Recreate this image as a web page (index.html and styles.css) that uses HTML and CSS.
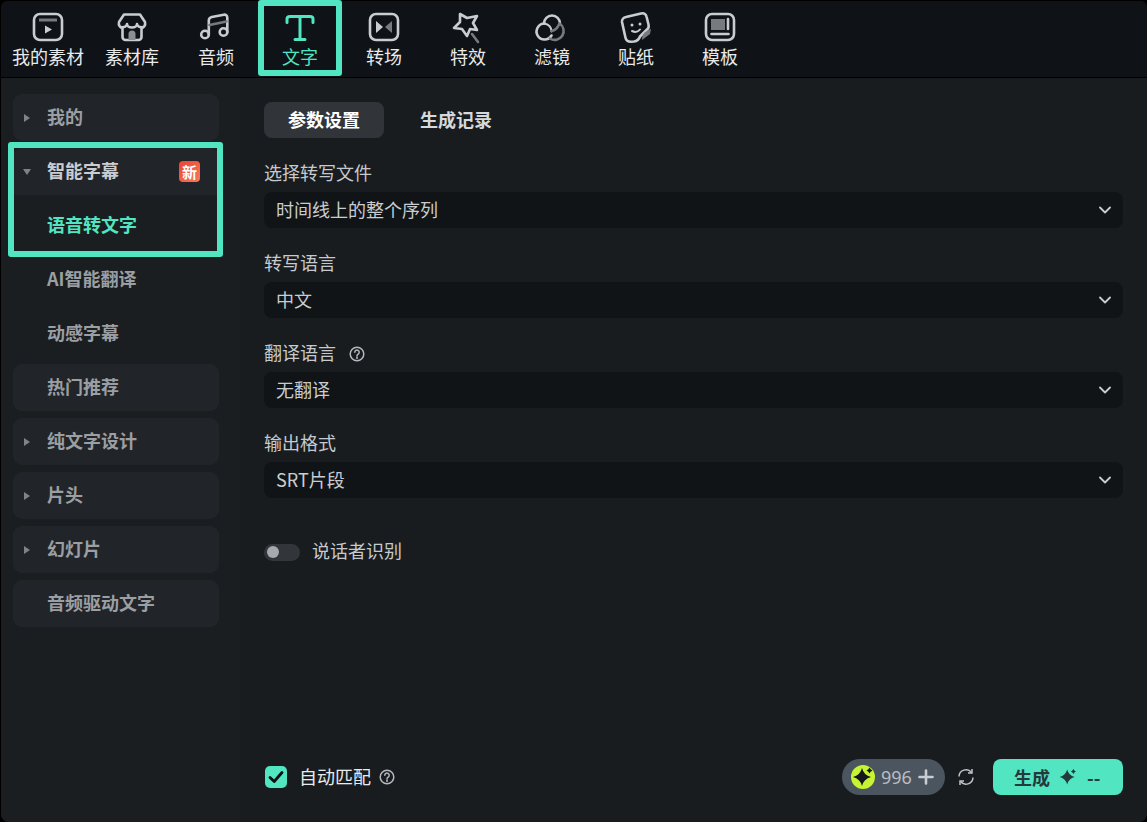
FILE: index.html
```html
<!DOCTYPE html>
<html lang="zh-CN">
<head>
<meta charset="utf-8">
<title>文字</title>
<link rel="stylesheet" href="styles.css">
</head>
<body>
<div class="app">
  <nav class="topbar">
    <div class="tab">
      <svg class="ico" viewBox="0 0 32 32"><rect x="2" y="3" width="28" height="26" rx="6" class="s"/><path d="M7 9h18" class="dim"/><path d="M13 14.500l7 4-7 4z" fill="#c9cdd1"/></svg>
      <span>我的素材</span>
    </div>
    <div class="tab">
      <svg class="ico" viewBox="0 0 32 32"><path d="M8 3.500h16l5 7.500c1 4-2 6-3.500 6v9a3 3 0 0 1-3 3h-13a3 3 0 0 1-3-3v-9C5 17 2 15 3 11z" class="s"/><path d="M5 16c3 1 6-1 6-3 0 2 2 3.500 5 3.500s5-1.500 5-3.500c0 2 3 4 6 3" class="s"/><path d="M12.500 29v-6a3.500 3.500 0 0 1 7 0v6z" fill="#8b8f93"/></svg>
      <span>素材库</span>
    </div>
    <div class="tab">
      <svg class="ico" viewBox="0 0 32 32"><circle cx="5" cy="23.500" r="3.800" class="s"/><circle cx="23.500" cy="21" r="3.800" class="s"/><path d="M8.800 23.500V9.500c0-2 .8-3 3-3.500l12-2.300c2-.4 3.500.8 3.500 3V21" class="s"/><path d="M9.500 14l17-3.500" class="dimthick"/></svg>
      <span>音频</span>
    </div>
    <div class="tab active">
      <svg class="ico" viewBox="0 0 32 32"><path d="M3 11.500V8Q3 5.500 6 5.500h20q3 0 3 2.500v3.500M16 6v22.500M11 28.500h10" class="t"/></svg>
      <span>文字</span>
    </div>
    <div class="tab">
      <svg class="ico" viewBox="0 0 32 32"><rect x="2" y="3" width="28" height="26" rx="6" class="s"/><path d="M8 10l7 6-7 6z" fill="#c9cdd1"/><path d="M24 10l-7 6 7 6z" fill="#777b7f"/></svg>
      <span>转场</span>
    </div>
    <div class="tab">
      <svg class="ico" viewBox="0 0 32 32"><path d="M8 3l7 4 10-2-4 7 4 7-7-1-3 7-5-7-8-1 6-6z" class="s"/><path d="M20 23l6 8" class="dimthick"/></svg>
      <span>特效</span>
    </div>
    <div class="tab">
      <svg class="ico" viewBox="0 0 32 32"><path d="M8 12.500a8 8 0 0 1 16 0" class="s"/><path d="M8.500 12.500a8 8 0 1 0 7 12" class="s"/><path d="M8.500 12.500c4 1 7 3.500 7 8" class="s thin"/><path d="M23.500 12.500a8 8 0 1 1-9.500 15" class="dimthick"/><path d="M15.500 20c3-.5 6-3 7.500-6.500" class="dimthick"/></svg>
      <span>滤镜</span>
    </div>
    <div class="tab">
      <svg class="ico" viewBox="0 0 32 32"><path d="M6 6l15-3.500c3-.7 5 .5 5.500 3l2 8c.5 2 0 4-1.500 5l-7 7c-1 3-3 4.500-6 5l-3 .2c-3 0-5-1.500-5.500-4L2 11c-.3-2.500 1.500-4.500 4-5z" class="s"/><circle cx="12" cy="14" r="1.500" fill="#c9cdd1"/><circle cx="20" cy="13" r="1.500" fill="#c9cdd1"/><path d="M12 20c3 1.500 6 1 8-1.500" class="s thin"/><path d="M22 29c0-6 2-8 9-11l-1 5z" fill="#777b7f"/></svg>
      <span>贴纸</span>
    </div>
    <div class="tab">
      <svg class="ico" viewBox="0 0 32 32"><rect x="2" y="3" width="28" height="26" rx="6" class="s"/><rect x="7" y="8" width="14" height="11" fill="#777b7f"/><path d="M24 8v10M7.500 23h17" class="s"/></svg>
      <span>模板</span>
    </div>
  </nav>

  <div class="content">
    <aside class="sidebar">
      <div class="cat"><i class="arrow"></i>我的</div>
      <div class="group">
        <div class="cat open"><i class="arrow down"></i>智能字幕<b class="new">新</b></div>
        <div class="sub current">语音转文字</div>
        <div class="sub">AI智能翻译</div>
        <div class="sub">动感字幕</div>
      </div>
      <div class="cat"><i class="arrow none"></i>热门推荐</div>
      <div class="cat"><i class="arrow"></i>纯文字设计</div>
      <div class="cat"><i class="arrow"></i>片头</div>
      <div class="cat"><i class="arrow"></i>幻灯片</div>
      <div class="cat"><i class="arrow none"></i>音频驱动文字</div>
      <div class="mark-side"></div>
    </aside>

    <main class="main">
      <div class="tabs2">
        <div class="seg on">参数设置</div>
        <div class="seg">生成记录</div>
      </div>
      <div class="field">
        <label class="lbl">选择转写文件</label>
        <div class="select">时间线上的整个序列<svg class="chev" viewBox="0 0 12 8"><path d="M1 1.500l5 5 5-5"/></svg></div>
      </div>
      <div class="field">
        <label class="lbl">转写语言</label>
        <div class="select">中文<svg class="chev" viewBox="0 0 12 8"><path d="M1 1.500l5 5 5-5"/></svg></div>
      </div>
      <div class="field">
        <label class="lbl">翻译语言<svg class="help gap" viewBox="0 0 16 16"><circle cx="8" cy="8" r="6.800"/><path d="M5.800 6.300a2.200 2.200 0 1 1 3.400 1.800c-.8.500-1.200 1-1.200 1.900"/><path d="M8 11.300v1.200"/></svg></label>
        <div class="select">无翻译<svg class="chev" viewBox="0 0 12 8"><path d="M1 1.500l5 5 5-5"/></svg></div>
      </div>
      <div class="field">
        <label class="lbl">输出格式</label>
        <div class="select">SRT片段<svg class="chev" viewBox="0 0 12 8"><path d="M1 1.500l5 5 5-5"/></svg></div>
      </div>
      <div class="toggle-row">
        <span class="toggle"><i></i></span>
        <span class="toggle-text">说话者识别</span>
      </div>
      <div class="bottom">
        <span class="check"><svg viewBox="0 0 22 22"><path d="M5 11.500l4.200 4L17 6.500"/></svg></span>
        <span class="auto">自动匹配</span>
        <svg class="help" viewBox="0 0 16 16"><circle cx="8" cy="8" r="6.800"/><path d="M5.800 6.300a2.200 2.200 0 1 1 3.400 1.800c-.8.500-1.200 1-1.200 1.900"/><path d="M8 11.300v1.200"/></svg>
        <div class="credits">
          <span class="coin"><svg viewBox="0 0 24 24"><path d="M11 3Q12.800 10.200 20 12 12.800 13.800 11 21 9.200 13.800 2 12 9.200 10.200 11 3z"/><path d="M18.500 2.500q.8 2.200 3 3-2.200.8-3 3-.8-2.200-3-3 2.200-.8 3-3z"/></svg></span>
          <span class="num">996</span>
          <svg class="plus" viewBox="0 0 16 16"><path d="M8 1.500v13M1.500 8h13"/></svg>
        </div>
        <svg class="refresh" viewBox="0 0 18 18"><path d="M2 8.500A7 7 0 0 1 14.500 4.500M16 9.500A7 7 0 0 1 3.500 13.500"/><path d="M15 1v4h-4M3 17v-4h4"/></svg>
        <div class="gen">生成<svg viewBox="0 0 24 24"><path d="M11 3Q12.800 10.200 20 12 12.800 13.800 11 21 9.200 13.800 2 12 9.200 10.200 11 3z"/><path d="M18.500 2.500q.8 2.200 3 3-2.200.8-3 3-.8-2.200-3-3 2.200-.8 3-3z"/></svg><span>--</span></div>
      </div>
    </main>
  </div>
  <div class="mark-top"></div>
</div>
</body>
</html>
```

FILE: styles.css
```css
* { box-sizing: border-box; }
html, body { margin: 0; height: 100%; background: #000; }
body { font-family: "Noto Sans CJK SC", "Liberation Sans", sans-serif; font-size: 18px; color: #c9cdd1; overflow: hidden; }
.app { position: relative; width: 1147px; height: 822px; background: #000; display: flex; flex-direction: column; padding: 1px 0 0 1px; overflow: hidden; }
.topbar { height: 76px; flex: none; display: flex; padding-left: 5px; background: #0f1317; border-radius: 6px 6px 0 0; }
.tab { width: 84px; display: flex; flex-direction: column; align-items: center; padding-top: 10px; color: #e8eaec; line-height: 24px; }
.tab span { margin-top: 1px; }
.ico { width: 32px; height: 32px; display: block; flex: none; overflow: visible; }
.s { fill: none; stroke: #c9cdd1; stroke-width: 2.600; stroke-linejoin: round; stroke-linecap: round; }
.thin { stroke-width: 2; }
.dim { fill: none; stroke: #777b7f; stroke-width: 3; }
.dimthick { fill: none; stroke: #777b7f; stroke-width: 2.600; stroke-linecap: round; }
.t { fill: none; stroke: #52e5c2; stroke-width: 3; stroke-linecap: round; stroke-linejoin: round; }
.active { color: #52e5c2; }
.mark-top { position: absolute; left: 258px; top: 0; width: 84px; height: 76px; border: 6px solid #52e5c2; border-radius: 3px; }
.content { flex: 1; display: flex; margin-top: 1px; min-height: 0; background: #181c1f; border-radius: 0 0 8px 8px; }
.sidebar { position: relative; width: 239px; flex: none; padding: 16px 21px 0 12px; background: #1a1e21; border-bottom-left-radius: 8px; display: flex; flex-direction: column; gap: 7px; font-weight: 700; color: #9b9fa3; }
.cat { height: 47px; display: flex; align-items: center; padding-bottom: 4px; background: #212529; border-radius: 9px; }
.arrow { width: 0; height: 0; margin: 4px 17px 0 11px; border-left: 6px solid #7f8387; border-top: 4px solid transparent; border-bottom: 4px solid transparent; flex: none; }
.arrow.down { margin: 4px 16px 0 10px; border-top: 6px solid #7f8387; border-left: 4px solid transparent; border-right: 4px solid transparent; border-bottom: 0; }
.arrow.none { border-color: transparent; }
.open { color: #c9cdd1; border-radius: 9px 9px 0 0; }
.group { display: flex; flex-direction: column; }
.sub { height: 54px; display: flex; align-items: center; padding: 4px 0 0 34px; }
.current { color: #52e5c2; }
.new { margin: 4px 19px 0 auto; width: 21px; height: 21px; border-radius: 4px; background: linear-gradient(135deg, #e8452f, #f77a5a); color: #fff; font-size: 15px; font-weight: 700; display: flex; align-items: center; justify-content: center; }
.mark-side { position: absolute; left: 7px; top: 64px; width: 215px; height: 115px; border: 6px solid #52e5c2; border-radius: 3px; }
.main { flex: 1; position: relative; margin-left: 12px; padding: 24px 24px 27px 12px; display: flex; flex-direction: column; }
.tabs2 { display: flex; gap: 12px; margin-bottom: 23px; height: 36px; font-weight: 700; }
.seg { width: 120px; display: flex; align-items: center; justify-content: center; padding-bottom: 2px; border-radius: 8px; color: #d6d9dc; }
.seg.on { background: #31353a; color: #fff; }
.field { height: 90px; flex: none; }
.lbl { display: flex; align-items: center; height: 26px; padding-bottom: 4px; margin-bottom: 5px; color: #c6cace; line-height: 22px; }
.select { height: 36px; display: flex; align-items: center; justify-content: space-between; padding: 0 12px 2px; background: #111417; border-radius: 8px; color: #c9cdd1; }
.chev { width: 12px; height: 8px; margin-top: 2px; fill: none; stroke: #c9cdd1; stroke-width: 1.800; stroke-linecap: round; stroke-linejoin: round; }
.help { width: 16px; height: 16px; fill: none; stroke: #b5b9bd; stroke-width: 1.500; stroke-linecap: round; flex: none; }
.help.gap { margin: 4px 0 0 13px; }
.toggle-row { display: flex; align-items: center; gap: 12px; margin-top: 18px; height: 26px; color: #c6cace; }
.toggle-text { padding-bottom: 4px; }
.toggle { width: 36px; height: 17px; border-radius: 9px; background: #32363a; display: flex; align-items: center; padding-left: 3px; }
.toggle i { width: 12px; height: 12px; border-radius: 50%; background: #a6a9ad; }
.bottom { margin-top: auto; display: flex; align-items: center; height: 36px; }
.check { width: 22px; height: 22px; margin-left: 1px; background: #52e5c2; border-radius: 5px; display: flex; }
.check svg { width: 22px; height: 22px; fill: none; stroke: #0c1012; stroke-width: 2.800; stroke-linecap: round; stroke-linejoin: round; }
.auto { margin-left: 12px; margin-right: 8px; padding-bottom: 2px; color: #e8eaec; }
.credits { margin-left: auto; width: 103px; height: 36px; border-radius: 18px; background: #4b5560; display: flex; align-items: center; padding-left: 9px; color: #b9bdc1; }
.coin { width: 24px; height: 24px; border-radius: 50%; background: #c6f432; display: flex; flex: none; }
.coin svg { width: 24px; height: 24px; fill: #14181b; }
.num { margin-left: 6px; font-family: "Noto Sans", "Liberation Sans", sans-serif; font-size: 18px; }
.plus { width: 16px; height: 16px; margin-left: 6px; fill: none; stroke: #c9cdd1; stroke-width: 2.600; stroke-linecap: round; }
.refresh { width: 18px; height: 18px; margin-left: 12px; fill: none; stroke: #c0c4c8; stroke-width: 1.500; }
.gen { width: 130px; height: 36px; margin-left: 18px; border-radius: 8px; background: #52e5c2; color: #24393a; font-weight: 700; display: flex; align-items: center; padding-left: 21px; }
.gen svg { width: 20px; height: 20px; margin-left: 8px; fill: #24393a; }
.gen span { margin-left: 9px; }
```
